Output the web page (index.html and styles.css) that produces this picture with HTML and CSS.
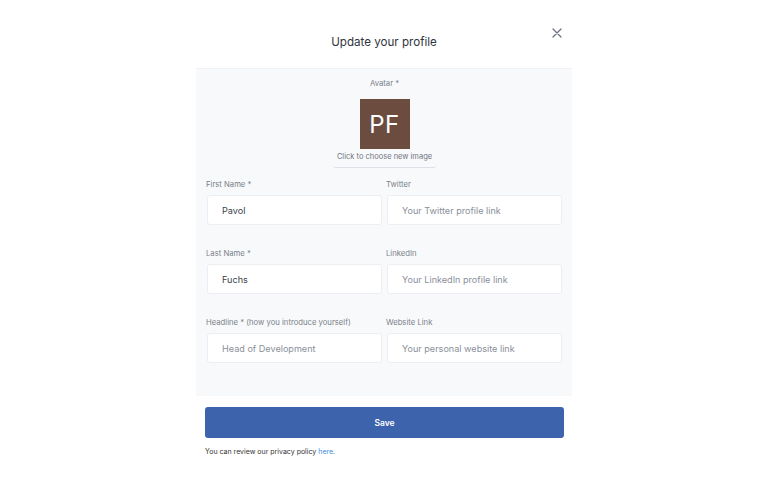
FILE: index.html
```html
<!DOCTYPE html>
<html lang="en">
<head>
    <meta charset="UTF-8">
    <meta name="viewport" content="width=device-width, initial-scale=1.0">
    <title>Update your profile</title>
    <link rel="stylesheet" href="styles.css">
</head>
<body>

<div class="modal">
    <div class="modal-header">
        <h2>Update your profile</h2>
        <button type="button" class="close-button" aria-label="Close">
            <svg width="10" height="10" viewBox="0 0 10 10">
                <path d="M1 1 L9 9 M9 1 L1 9" stroke="#6b7385" stroke-width="1.3" stroke-linecap="round"/>
            </svg>
        </button>
    </div>

    <form class="profile-form">
        <div class="avatar-field">
            <div class="field-label">Avatar *</div>
            <div class="avatar">PF</div>
            <div class="avatar-hint">Click to choose new image</div>
        </div>

        <div class="fields">
            <div class="field">
                <label for="firstName">First Name *</label>
                <input type="text" id="firstName" value="Pavol">
            </div>
            <div class="field">
                <label for="twitter">Twitter</label>
                <input type="text" id="twitter" placeholder="Your Twitter profile link">
            </div>
            <div class="field">
                <label for="lastName">Last Name *</label>
                <input type="text" id="lastName" value="Fuchs">
            </div>
            <div class="field">
                <label for="linkedin">LinkedIn</label>
                <input type="text" id="linkedin" placeholder="Your LinkedIn profile link">
            </div>
            <div class="field">
                <label for="headline">Headline * (how you introduce yourself)</label>
                <input type="text" id="headline" placeholder="Head of Development">
            </div>
            <div class="field">
                <label for="website">Website Link</label>
                <input type="text" id="website" placeholder="Your personal website link">
            </div>
        </div>
    </form>

    <div class="modal-footer">
        <button type="button" class="save-button">Save</button>
        <p class="privacy">You can review our privacy policy <a href="#">here.</a></p>
    </div>
</div>

</body>
</html>
```

FILE: styles.css
```css
body {
    margin: 0;
    background-color: #fff;
    font-family: Inter, "Noto Sans", sans-serif;
    color: #333;
}

.modal {
    width: 376px;
    margin: 0 auto;
    padding-top: 20px;
}

.modal-header {
    position: relative;
    height: 48px;
    display: flex;
    justify-content: center;
}

.modal-header h2 {
    margin: 15px 0 0;
    font-size: 11.6px;
    font-weight: 400;
    color: #2f3440;
    line-height: 14px;
}

.close-button {
    position: absolute;
    right: 8px;
    top: 6px;
    width: 14px;
    height: 14px;
    padding: 0;
    border: none;
    background: none;
    display: flex;
    align-items: center;
    justify-content: center;
    cursor: pointer;
}

.profile-form {
    background-color: #f8f9fb;
    border-top: 1px solid #f0f1f4;
    padding: 9px 10px 33px 11px;
}

.avatar-field {
    display: flex;
    flex-direction: column;
    align-items: center;
}

.field-label,
.field label {
    font-size: 7.7px;
    color: #7a7f8a;
    line-height: 11px;
}

.avatar {
    margin-top: 10px;
    width: 50px;
    height: 50px;
    background-color: #6b4c3f;
    color: #fff;
    font-size: 24px;
    display: flex;
    align-items: center;
    justify-content: center;
    letter-spacing: 0.5px;
}

.avatar-hint {
    font-size: 7.5px;
    color: #6f7480;
    line-height: 11px;
    padding: 2px 4px 5px;
    border-bottom: 1px solid #dde0e6;
    border-radius: 0 0 3px 3px;
}

.fields {
    display: grid;
    grid-template-columns: minmax(0, 1fr) minmax(0, 1fr);
    column-gap: 5px;
    row-gap: 23px;
    margin-top: 11px;
}

.field {
    display: flex;
    flex-direction: column;
    min-width: 0;
}

.field label {
    margin-left: -1px;
    margin-bottom: 5px;
}

.field input {
    width: 100%;
    min-width: 0;
    height: 30px;
    box-sizing: border-box;
    border: 1px solid #eceef2;
    border-radius: 3px;
    background-color: #fff;
    padding: 0 14px;
    font-family: Inter, "Noto Sans", sans-serif;
    font-size: 9.1px;
    color: #3a3f4a;
}

.field input::placeholder {
    color: #8a8f9a;
}

.modal-footer {
    padding: 11px 8px 0 9px;
}

.save-button {
    width: 100%;
    height: 31px;
    background-color: #3e63ad;
    color: #fff;
    border: none;
    border-radius: 3px;
    font-family: Inter, "Noto Sans", sans-serif;
    font-size: 8.5px;
    font-weight: 600;
    cursor: pointer;
}

.privacy {
    margin: 9px 0 0;
    font-size: 7px;
    color: #333;
}

.privacy a {
    color: #3b8de0;
    text-decoration: none;
}
```
